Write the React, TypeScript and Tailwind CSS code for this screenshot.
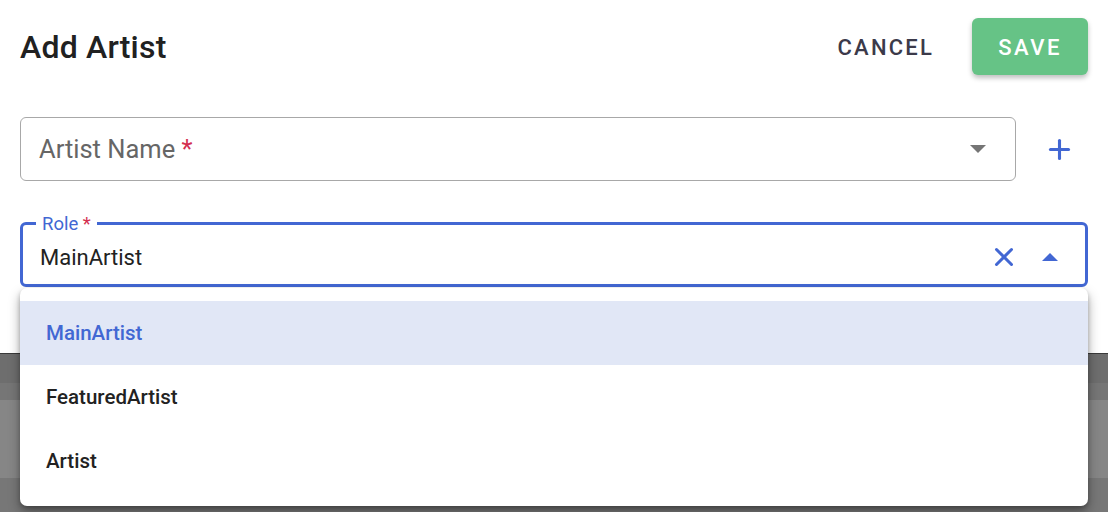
import { Plus, X } from 'lucide-react';

const options = ['MainArtist', 'FeaturedArtist', 'Artist'];

function Caret({ up, className }: { up?: boolean; className?: string }) {
  return (
    <svg width="16" height="8" viewBox="0 0 16 8" className={className}>
      {up ? <path d="M0 8 L8 0 L16 8 Z" fill="currentColor" /> : <path d="M0 0 L8 8 L16 0 Z" fill="currentColor" />}
    </svg>
  );
}

export default function App() {
  return (
    <div className="relative w-[1108px] h-[512px] overflow-hidden font-['Roboto',sans-serif] bg-[#808080]">
      {/* dialog */}
      <div className="h-[353px] bg-white flex flex-col px-[20px]">
        <div className="flex items-center justify-between pt-[18px]">
          <h2 className="text-[32px] font-medium text-[#212121] leading-none tracking-[0.2px] pt-[1px]">Add Artist</h2>
          <div className="flex items-center gap-[20px]">
            <button className="h-[57px] px-[18px] text-[22px] font-medium tracking-[2.2px] text-[#3b3a4a] pt-[2px]">CANCEL</button>
            <button className="h-[57px] w-[116px] rounded-[6px] bg-[#66c386] text-white text-[22px] font-medium tracking-[2.5px] pt-[2px] shadow-[0_3px_5px_rgba(0,0,0,0.25)]">
              SAVE
            </button>
          </div>
        </div>

        <div className="flex items-center mt-[42px]">
          <div className="flex-1 h-[64px] border border-[#a8a8a8] rounded-[6px] flex items-center pl-[18px] pr-[29px]">
            <span className="text-[25.5px] text-[#666666] flex-1">
              Artist Name <span className="text-[#d32f4f]">*</span>
            </span>
            <Caret className="text-[#757575]" />
          </div>
          <div className="w-[72px] flex justify-center pl-[14px]">
            <Plus size={31} strokeWidth={2.4} className="text-[#4267d3]" />
          </div>
        </div>

        <div className="relative mt-[41px] h-[65px] border-[3px] border-[#4267d3] rounded-[6px] flex items-center pl-[17px] pr-[27px]">
          <span className="absolute -top-[12px] left-[13px] bg-white px-[6px] text-[18.5px] text-[#4267d3] leading-[22px]">
            Role <span className="text-[#d32f4f]">*</span>
          </span>
          <span className="flex-1 text-[22px] text-[#222222] pt-[6px]">MainArtist</span>
          <X size={30} strokeWidth={2.4} className="text-[#4267d3] mr-[23px] mt-[4px]" />
          <Caret up className="text-[#4267d3] mt-[4px]" />
        </div>
      </div>

      {/* backdrop content behind dialog */}
      <div className="flex flex-col">
        <div className="h-px bg-[#3a3a3a]" />
        <div className="h-[29px] bg-[#6e6e6e]" />
        <div className="h-[17px] bg-[#767676]" />
        <div className="h-[78px] bg-[#868686]" />
        <div className="h-[34px] bg-[#777777]" />
      </div>

      {/* options menu */}
      <div className="absolute left-[20px] top-[288px] w-[1068px] h-[218px] bg-white rounded-[7px] shadow-[0_6px_12px_rgba(0,0,0,0.35),0_2px_4px_rgba(0,0,0,0.2)] py-[13px]">
        {options.map((o, i) => (
          <div
            key={o}
            className={
              i === 0
                ? 'h-[64px] flex items-center pl-[26px] bg-[#e1e7f6] text-[#4267d3] text-[20.5px] font-medium'
                : 'h-[64px] flex items-center pl-[26px] text-[#222222] text-[20.5px] font-medium'
            }
          >
            {o}
          </div>
        ))}
      </div>
    </div>
  );
}
